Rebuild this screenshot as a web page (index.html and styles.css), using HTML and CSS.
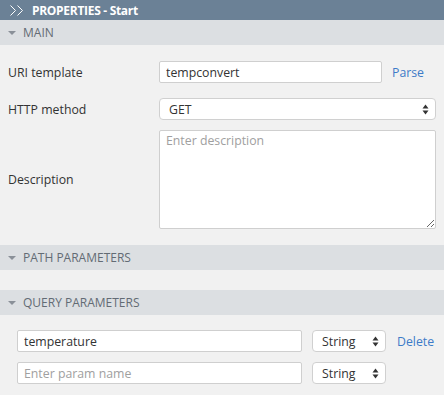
FILE: index.html
```html
<!DOCTYPE html>
<html>
<head>
<meta charset="utf-8">
<link rel="stylesheet" href="styles.css">
</head>
<body>
<div class="panel">
  <div class="titlebar">
    <svg class="chev" width="16" height="11" viewBox="0 0 16 11"><path d="M1.5 0.5 L6.5 5.5 L1.5 10.5 M8.5 0.5 L13.5 5.5 L8.5 10.5" fill="none" stroke="#fff" stroke-width="1"/></svg>
    <span class="title">PROPERTIES - Start</span>
  </div>

  <div class="section-head"><span class="tri"></span>MAIN</div>
  <div class="main-body">
    <div class="row row-uri">
      <label class="lbl">URI template</label>
      <input class="inp inp-uri" type="text" value="tempconvert">
      <a class="link">Parse</a>
    </div>
    <div class="row row-method">
      <label class="lbl">HTTP method</label>
      <div class="sel sel-wide">
        <span class="sel-text">GET</span>
        <svg class="updown" width="7" height="11" viewBox="0 0 7 11"><path d="M3.5 0.5 L6.5 4.5 L0.5 4.5 Z M0.5 6.5 L6.5 6.5 L3.5 10.5 Z" fill="#333"/></svg>
      </div>
    </div>
    <div class="row row-desc">
      <label class="lbl">Description</label>
      <textarea class="ta" placeholder="Enter description"></textarea>
    </div>
  </div>

  <div class="section-head"><span class="tri"></span>PATH PARAMETERS</div>
  <div class="spacer"></div>

  <div class="section-head"><span class="tri"></span>QUERY PARAMETERS</div>
  <div class="query-body">
    <div class="qrow">
      <input class="inp inp-param" type="text" value="temperature">
      <div class="sel sel-type">
        <span class="sel-text">String</span>
        <svg class="updown" width="7" height="11" viewBox="0 0 7 11"><path d="M3.5 0.5 L6.5 4.5 L0.5 4.5 Z M0.5 6.5 L6.5 6.5 L3.5 10.5 Z" fill="#333"/></svg>
      </div>
      <a class="link">Delete</a>
    </div>
    <div class="qrow">
      <input class="inp inp-param" type="text" placeholder="Enter param name">
      <div class="sel sel-type">
        <span class="sel-text">String</span>
        <svg class="updown" width="7" height="11" viewBox="0 0 7 11"><path d="M3.5 0.5 L6.5 4.5 L0.5 4.5 Z M0.5 6.5 L6.5 6.5 L3.5 10.5 Z" fill="#333"/></svg>
      </div>
    </div>
  </div>
</div>
</body>
</html>
```
FILE: styles.css
```css
* { box-sizing: border-box; }
html, body { margin: 0; padding: 0; background: #f1f1f1; }
body {
  font-family: "Open Sans", "Liberation Sans", sans-serif;
  font-size: 12.3px;
  color: #333;
  width: 444px;
  height: 395px;
  overflow: hidden;
}
.titlebar {
  height: 20px;
  background: #6b8196;
  display: flex;
  align-items: center;
  padding-left: 9px;
  color: #fff;
}
.chev { margin-right: 7px; }
.title { font-weight: 700; font-size: 12px; letter-spacing: -0.3px; }

.section-head {
  height: 25px;
  background: #dcdfe2;
  display: flex;
  align-items: center;
  padding-left: 8px;
  color: #636b74;
  font-size: 12px;
}
.tri {
  width: 0; height: 0;
  border-left: 4px solid transparent;
  border-right: 4px solid transparent;
  border-top: 4px solid #8a9098;
  margin-right: 7px;
}

.main-body { padding: 16px 8px 16px 8px; }
.row { display: flex; align-items: center; }
.lbl { width: 151px; flex: none; }
.row-method { margin-top: 15px; }
.row-desc { margin-top: 10px; }

.inp {
  height: 22px;
  border: 1px solid #cfcfcf;
  border-radius: 2px;
  background: #fff;
  font-family: inherit;
  font-size: 12.3px;
  color: #333;
  padding: 0 6px;
  outline: none;
}
.inp::placeholder { color: #a0a0a0; }
.inp-uri { width: 223px; }
.link { color: #3d7bc8; margin-left: 10px; }

.sel {
  height: 22px;
  border: 1px solid #d0d0d0;
  border-radius: 4px;
  background: #fff;
  display: flex;
  align-items: center;
  justify-content: space-between;
  padding: 0 6px 0 9px;
}
.sel-wide { width: 277px; }
.updown { display: block; }

.ta {
  width: 277px;
  height: 99px;
  border: 1px solid #cfcfcf;
  border-radius: 2px;
  background: #fff;
  font-family: inherit;
  font-size: 12.3px;
  padding: 1px 6px;
  color: #333;
  resize: both;
  outline: none;
}
.ta::placeholder { color: #a0a0a0; }

.spacer { height: 20px; }

.query-body { padding: 15px 0 0 17px; }
.qrow { display: flex; align-items: center; margin-bottom: 10px; }
.inp-param { width: 285px; }
.sel-type { width: 74px; margin-left: 10px; }
.qrow .link { margin-left: 11px; }
```
